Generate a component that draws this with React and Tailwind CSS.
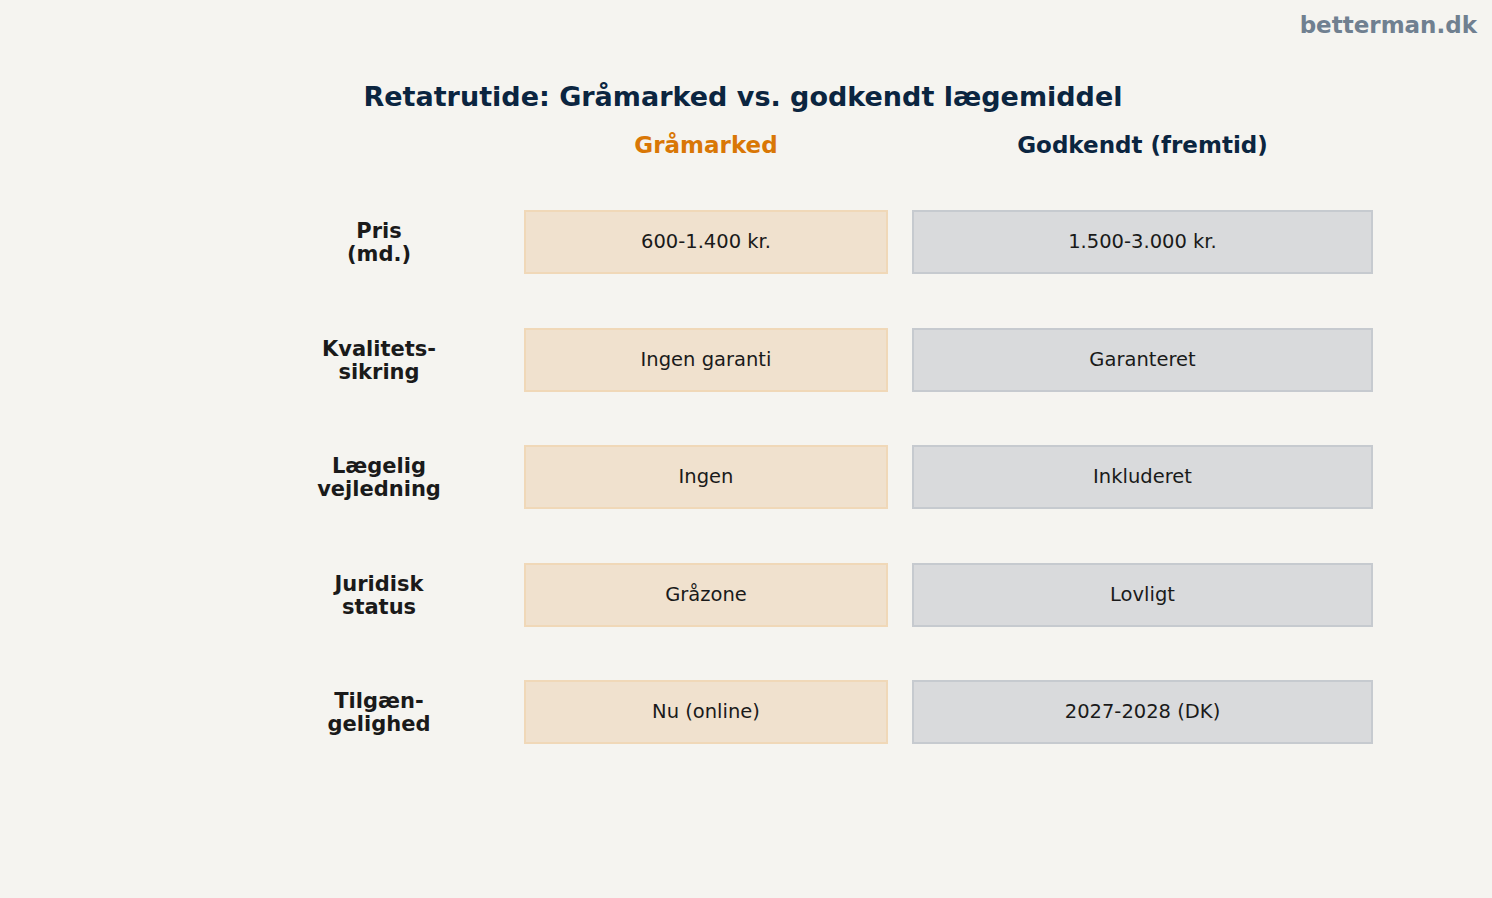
const rows = [
  { label: ["Pris", "(md.)"], grey: "600-1.400 kr.", ok: "1.500-3.000 kr." },
  { label: ["Kvalitets-", "sikring"], grey: "Ingen garanti", ok: "Garanteret" },
  { label: ["Lægelig", "vejledning"], grey: "Ingen", ok: "Inkluderet" },
  { label: ["Juridisk", "status"], grey: "Gråzone", ok: "Lovligt" },
  { label: ["Tilgæn-", "gelighed"], grey: "Nu (online)", ok: "2027-2028 (DK)" },
];

export default function App() {
  return (
    <div className="w-full h-[898px] bg-[#f5f4f0] text-[#1a1a1a] font-['DejaVu_Sans',sans-serif] overflow-hidden">
      {/* watermark */}
      <div className="flex justify-end pr-[15px] pt-[11px] h-[41px]">
        <span className="text-[23px] leading-[28px] font-bold text-[#708090]">betterman.dk</span>
      </div>

      <h1 className="mt-[40px] pr-[6px] text-center text-[27px] leading-[32px] font-bold text-[#0b2540]">
        Retatrutide: Gråmarked vs. godkendt lægemiddel
      </h1>

      <div className="ml-[279px] w-[1094px]">
        {/* column heads */}
        <div className="flex mt-[19px]">
          <div className="w-[245px]" />
          <div className="w-[364px] text-center text-[23px] leading-[26px] font-bold text-[#d97706]">Gråmarked</div>
          <div className="w-[461px] ml-[24px] text-center text-[23px] leading-[26px] font-bold text-[#0b2540]">Godkendt (fremtid)</div>
        </div>

        {/* rows */}
        <div className="flex flex-col gap-[53.5px] mt-[52px]">
          {rows.map((r) => (
            <div key={r.grey} className="flex h-[64px]">
              <div className="w-[200px] mr-[45px] pt-[2px] flex flex-col items-center justify-center text-[21px] leading-[23px] font-bold">
                <span>{r.label[0]}</span>
                <span>{r.label[1]}</span>
              </div>
              <div className="w-[364px] flex items-center justify-center bg-[#f0e1ce] border-2 border-[#f0d8b8] text-[19.5px]">
                {r.grey}
              </div>
              <div className="w-[461px] ml-[24px] flex items-center justify-center bg-[#d9dadc] border-2 border-[#c6cacf] text-[19.5px]">
                {r.ok}
              </div>
            </div>
          ))}
        </div>
      </div>
    </div>
  );
}
